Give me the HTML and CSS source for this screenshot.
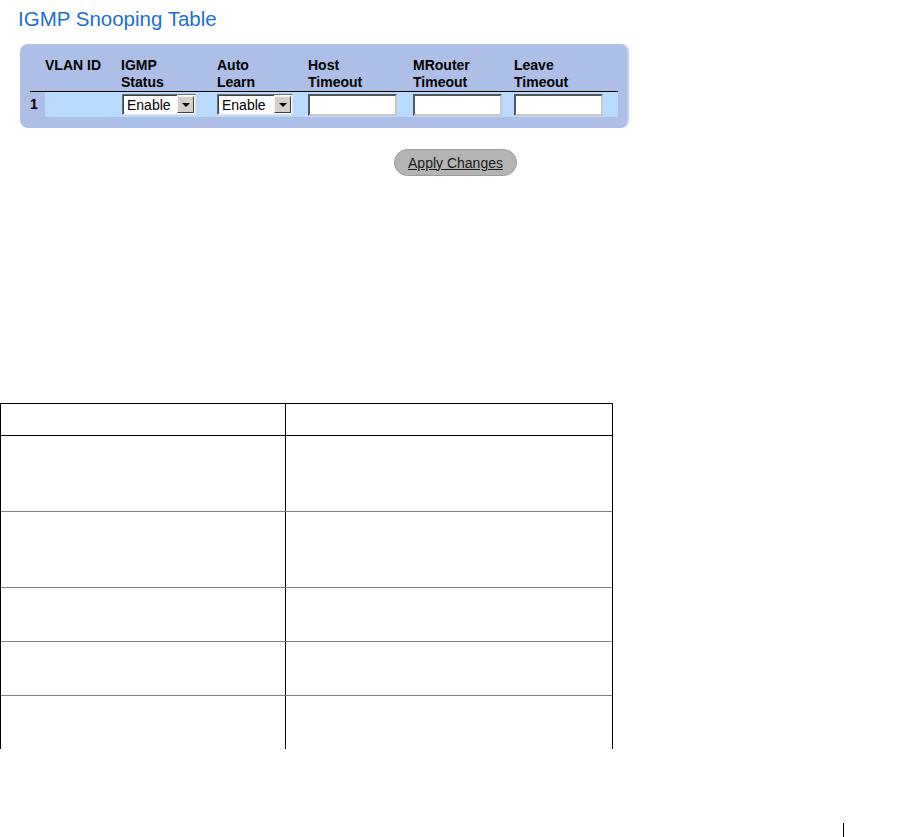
FILE: index.html
```html
<!DOCTYPE html>
<html lang="en">
<head>
    <meta charset="UTF-8">
    <title>IGMP Snooping Table</title>
    <link rel="stylesheet" href="styles.css">
</head>
<body>
    <h1 class="title">IGMP Snooping Table</h1>

    <div class="panel">
        <table class="snoop-table">
            <colgroup>
                <col class="c-num">
                <col class="c-vlan">
                <col class="c-igmp">
                <col class="c-auto">
                <col class="c-host">
                <col class="c-mrouter">
                <col class="c-leave">
            </colgroup>
            <thead>
                <tr>
                    <th></th>
                    <th>VLAN ID<br>&nbsp;</th>
                    <th>IGMP<br>Status</th>
                    <th>Auto<br>Learn</th>
                    <th>Host<br>Timeout</th>
                    <th>MRouter<br>Timeout</th>
                    <th>Leave<br>Timeout</th>
                </tr>
            </thead>
            <tbody>
                <tr>
                    <td class="num">1</td>
                    <td class="cell"></td>
                    <td class="cell">
                        <div class="dropdown igmp">
                            <select><option>Enable</option><option>Disable</option></select>
                            <span class="dropdown-btn"><span class="arrow"></span></span>
                        </div>
                    </td>
                    <td class="cell">
                        <div class="dropdown auto">
                            <select><option>Enable</option><option>Disable</option></select>
                            <span class="dropdown-btn"><span class="arrow"></span></span>
                        </div>
                    </td>
                    <td class="cell"><input type="text" class="field"></td>
                    <td class="cell"><input type="text" class="field"></td>
                    <td class="cell"><input type="text" class="field"></td>
                </tr>
            </tbody>
        </table>
    </div>

    <div class="actions">
        <button class="apply-btn">Apply Changes</button>
    </div>

    <div class="spec-table">
        <div class="spec-row head"><div></div><div></div></div>
        <div class="spec-row tall"><div></div><div></div></div>
        <div class="spec-row tall"><div></div><div></div></div>
        <div class="spec-row"><div></div><div></div></div>
        <div class="spec-row"><div></div><div></div></div>
        <div class="spec-row last"><div></div><div></div></div>
    </div>

    <div class="page-mark"></div>
</body>
</html>
```

FILE: styles.css
```css
body {
    margin: 0;
    font-family: 'Liberation Sans', Arial, sans-serif;
    color: #000;
    background: #fff;
}

.title {
    margin: 0;
    padding: 9px 0 0 18px;
    font-size: 20.5px;
    line-height: 20px;
    font-weight: normal;
    color: #1b6fd2;
}

.panel {
    margin: 15px 0 0 20px;
    width: 609px;
    height: 84px;
    box-sizing: border-box;
    padding: 13px 11px 0 10px;
    background: #adbfe6;
    border-radius: 8px;
    border-right: 2px solid #c3d1ee;
}

.snoop-table {
    border-collapse: collapse;
    table-layout: fixed;
    width: 588px;
}

.c-num { width: 15px; }
.c-vlan { width: 76px; }
.c-igmp { width: 96px; }
.c-auto { width: 91px; }
.c-host { width: 105px; }
.c-mrouter { width: 101px; }
.c-leave { width: 104px; }

.snoop-table th {
    padding: 0;
    height: 34px;
    text-align: left;
    vertical-align: top;
    font-size: 14px;
    line-height: 17px;
    font-weight: bold;
    border-bottom: 1px solid #000;
}

.snoop-table td {
    padding: 2px 0 0 0;
    height: 23px;
    vertical-align: top;
}

.snoop-table td.num {
    font-size: 14px;
    font-weight: bold;
    line-height: 25px;
    padding: 0;
}

.snoop-table td.cell {
    background: #b9dcfe;
}

.dropdown {
    display: flex;
    height: 21px;
    box-sizing: border-box;
    border: 1px solid;
    border-color: #6e6e6e #e4e4e4 #e4e4e4 #6e6e6e;
    background: #fff;
}

.dropdown.igmp { width: 74px; margin-left: 1px; }
.dropdown.auto { width: 76px; }

.dropdown select {
    flex: 1;
    min-width: 0;
    appearance: none;
    -webkit-appearance: none;
    border: none;
    border-left: 1px solid #404040;
    border-top: 1px solid #404040;
    background: #fff;
    font-family: 'Liberation Sans', Arial, sans-serif;
    font-size: 14px;
    padding: 0 0 0 3px;
    margin: 0;
    color: #000;
    outline: none;
}

.dropdown-btn {
    width: 17px;
    box-sizing: border-box;
    background: #d4d0c8;
    border: 1px solid;
    border-color: #f4f4f4 #404040 #404040 #f4f4f4;
    margin: 1px 1px 1px 0;
    display: flex;
    align-items: center;
    justify-content: center;
}

.arrow {
    width: 0;
    height: 0;
    border-left: 4px solid transparent;
    border-right: 4px solid transparent;
    border-top: 4px solid #000;
}

.field {
    width: 89px;
    height: 22px;
    box-sizing: border-box;
    margin: 0;
    padding: 0 3px;
    border: 2px solid;
    border-color: #555 #c8c8c8 #c8c8c8 #555;
    background: #fff;
    font-family: 'Liberation Sans', Arial, sans-serif;
    font-size: 14px;
    outline: none;
}

.actions {
    margin: 21px 0 0 394px;
}

.apply-btn {
    display: block;
    width: 123px;
    height: 27px;
    box-sizing: border-box;
    padding: 0;
    border: 1px solid #9c9c9c;
    border-radius: 14px;
    background: #b3b3b3;
    color: #1a1a1a;
    font-family: 'Liberation Sans', Arial, sans-serif;
    font-size: 14px;
    text-decoration: underline;
    cursor: pointer;
}

.spec-table {
    margin-top: 227px;
    width: 613px;
    box-sizing: border-box;
    border-top: 1px solid #000;
    border-left: 1px solid #000;
    border-right: 1px solid #000;
}

.spec-row {
    display: flex;
    height: 54px;
    box-sizing: border-box;
    border-bottom: 1px solid #808080;
}

.spec-row > div:first-child {
    width: 285px;
    box-sizing: border-box;
    border-right: 1px solid #000;
}

.spec-row > div:last-child {
    flex: 1;
}

.spec-row.head {
    height: 32px;
    border-bottom-color: #000;
}

.spec-row.tall {
    height: 76px;
}

.spec-row.last {
    height: 53px;
    border-bottom: none;
}

.page-mark {
    margin: 74px 0 0 843px;
    width: 0;
    height: 14px;
    border-left: 1px solid #000;
}
```
